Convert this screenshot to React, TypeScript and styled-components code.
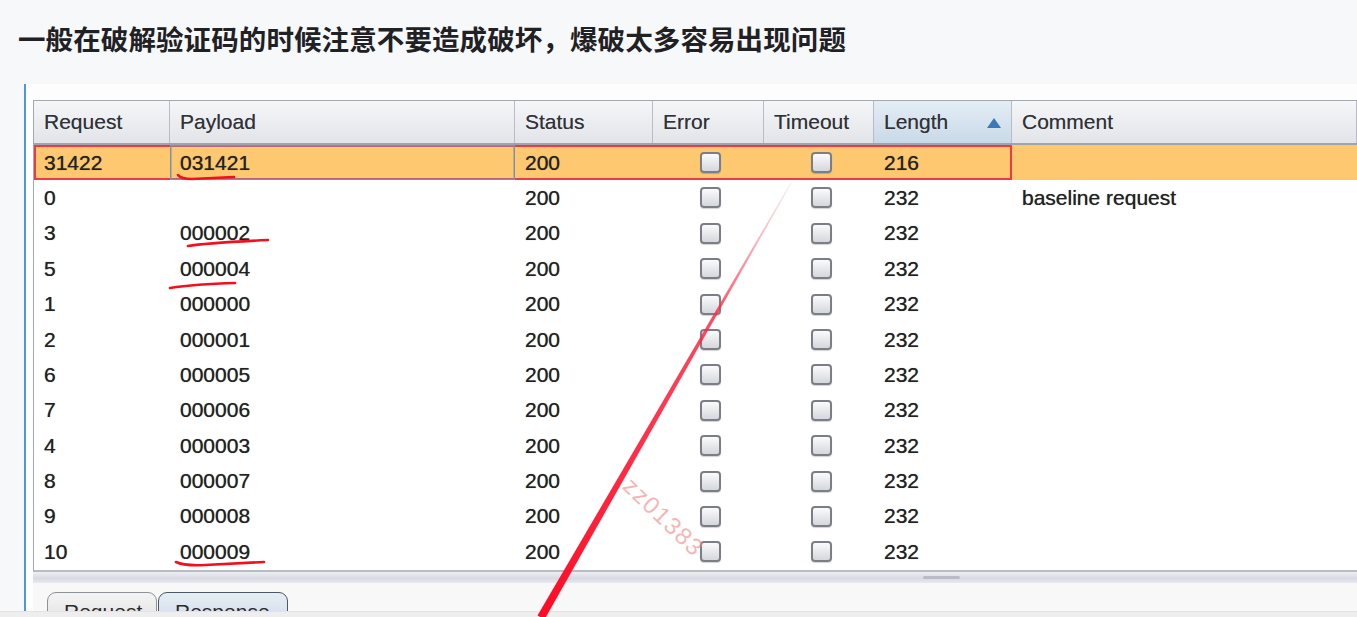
import React from "react";
import styled, { createGlobalStyle } from "styled-components";

const GlobalStyle = createGlobalStyle`
  html, body { margin: 0; padding: 0; }
  body {
    background: #f7f8fa;
    font-family: "Liberation Sans", Arial, sans-serif;
    width: 1357px;
    height: 617px;
    overflow: hidden;
  }
`;

const Page = styled.div`
  position: relative;
  width: 1357px;
  height: 617px;
  display: flex;
  flex-direction: column;
  overflow: hidden;
`;

const Heading = styled.h2`
  margin: 0;
  height: 84px;
  box-sizing: border-box;
  padding: 21px 0 0 18px;
  font-family: "Noto Sans CJK SC", sans-serif;
  font-weight: 700;
  font-size: 27.5px;
  line-height: 34px;
  color: #1f2124;
  letter-spacing: 0.1px;
`;

const Quote = styled.div`
  margin-left: 24px;
  height: 528px;
  box-sizing: border-box;
  border-left: 2px solid #4f97dc;
  background: #fdfdfd;
  padding: 16px 0 0 7px;
  display: flex;
  flex-direction: column;
  overflow: hidden;
`;

const Shot = styled.div`
  display: flex;
  flex-direction: column;
  flex: 1;
  min-height: 0;
`;

const Table = styled.div`
  border-left: 1px solid #a4a9b0;
  border-top: 1px solid #a4a9b0;
  border-bottom: 2px solid #b8bcc2;
  background: #fff;
  display: flex;
  flex-direction: column;
`;

const HeaderRow = styled.div`
  display: flex;
  height: 44px;
  box-sizing: border-box;
  border-bottom: 2px solid #9ea4ac;
`;

const HeadCell = styled.div<{ $w?: number; $sorted?: boolean }>`
  ${(p) => (p.$w ? `width: ${p.$w}px;` : "flex: 1;")}
  flex-shrink: 0;
  box-sizing: border-box;
  display: flex;
  align-items: center;
  justify-content: space-between;
  padding: 0 10px 0 10px;
  border-right: 1px solid #b8bdc5;
  background: ${(p) =>
    p.$sorted
      ? "linear-gradient(#e4edf6, #c9d9e8)"
      : "linear-gradient(#f5f6f8, #e2e4e9)"};
  font-size: 21px;
  color: #2f3338;
  text-shadow: 0 0 0.6px rgba(40, 40, 40, 0.6);
`;

const SortArrow = styled.span`
  width: 0;
  height: 0;
  border-left: 7px solid transparent;
  border-right: 7px solid transparent;
  border-bottom: 10px solid #3a78b8;
  margin-top: 2px;
`;

const Row = styled.div<{ $hl?: boolean }>`
  display: flex;
  height: 35.4px;
  background: ${(p) => (p.$hl ? "#fdc86f" : "#ffffff")};
`;

const Marked = styled.div<{ $hl?: boolean }>`
  display: flex;
  box-shadow: ${(p) => (p.$hl ? "inset 0 0 0 2px #ef3a44" : "none")};
`;

const Cell = styled.div<{ $w?: number; $center?: boolean; $focus?: boolean }>`
  ${(p) => (p.$w ? `width: ${p.$w}px;` : "flex: 1;")}
  flex-shrink: 0;
  box-sizing: border-box;
  display: flex;
  align-items: center;
  justify-content: ${(p) => (p.$center ? "center" : "flex-start")};
  padding: ${(p) => (p.$center ? "0 0 0 4px" : "0 0 0 10px")};
  font-size: 21px;
  color: #222222;
  text-shadow: 0 0 0.7px rgba(20, 20, 20, 0.7);
  box-shadow: ${(p) => (p.$focus ? "inset 0 0 0 1.5px #7a92ae" : "none")};
`;

const Check = styled.span`
  width: 21px;
  height: 21px;
  box-sizing: border-box;
  border-radius: 4px;
  border: 2px solid #7b7f85;
  background: linear-gradient(#fbfbfc, #d4d7dc);
  box-shadow: 0 1px 1px rgba(0, 0, 0, 0.18);
`;

const ScrollStrip = styled.div`
  height: 11px;
  background: linear-gradient(#eceef2, #d8dae3 60%, #e9eaef);
  display: flex;
  align-items: flex-start;
  padding-left: 890px;
`;

const Thumb = styled.span`
  margin-top: 4px;
  width: 37px;
  height: 3px;
  border-radius: 2px;
  background: #b9bcc6;
`;

const TabArea = styled.div`
  flex: 1;
  background: #f8f8f8;
  display: flex;
  align-items: flex-start;
  padding: 9px 0 0 14px;
  overflow: hidden;
`;

const Tab = styled.div<{ $active?: boolean; $w: number }>`
  width: ${(p) => p.$w}px;
  height: 40px;
  box-sizing: border-box;
  border: 1.5px solid ${(p) => (p.$active ? "#4d5864" : "#8d9198")};
  border-radius: 9px 9px 0 0;
  background: ${(p) =>
    p.$active
      ? "linear-gradient(#e6edf4, #cdd9e6)"
      : "linear-gradient(#f4f4f4, #dddddd)"};
  font-size: 21px;
  color: #2c2c2c;
  padding: 7px 0 0 16px;
  margin-right: 1px;
`;

const Footer = styled.div`
  height: 5px;
  background: #eeeeef;
  border-top: 1px solid #e3e3e5;
`;

const Overlay = styled.svg`
  position: absolute;
  left: 0;
  top: 0;
  pointer-events: none;
`;

const Watermark = styled.span`
  position: absolute;
  left: 627px;
  top: 468px;
  transform-origin: 0 50%;
  transform: rotate(44deg);
  font-family: "Liberation Sans", Arial, sans-serif;
  font-size: 24px;
  letter-spacing: 1.5px;
  color: rgba(243, 130, 132, 0.6);
  white-space: nowrap;
  pointer-events: none;
`;

const W = [136, 345, 138, 111, 110, 138];

type R = { req: string; pay: string; len: string; comment?: string };

const rows: R[] = [
  { req: "31422", pay: "031421", len: "216" },
  { req: "0", pay: "", len: "232", comment: "baseline request" },
  { req: "3", pay: "000002", len: "232" },
  { req: "5", pay: "000004", len: "232" },
  { req: "1", pay: "000000", len: "232" },
  { req: "2", pay: "000001", len: "232" },
  { req: "6", pay: "000005", len: "232" },
  { req: "7", pay: "000006", len: "232" },
  { req: "4", pay: "000003", len: "232" },
  { req: "8", pay: "000007", len: "232" },
  { req: "9", pay: "000008", len: "232" },
  { req: "10", pay: "000009", len: "232" },
];

export default function App() {
  return (
    <Page>
      <GlobalStyle />
      <Heading>一般在破解验证码的时候注意不要造成破坏，爆破太多容易出现问题</Heading>
      <Quote>
        <Shot>
          <Table>
            <HeaderRow>
              <HeadCell $w={W[0]}>Request</HeadCell>
              <HeadCell $w={W[1]}>Payload</HeadCell>
              <HeadCell $w={W[2]}>Status</HeadCell>
              <HeadCell $w={W[3]}>Error</HeadCell>
              <HeadCell $w={W[4]}>Timeout</HeadCell>
              <HeadCell $w={W[5]} $sorted>
                Length
                <SortArrow />
              </HeadCell>
              <HeadCell>Comment</HeadCell>
            </HeaderRow>
            {rows.map((r, i) => (
              <Row key={i} $hl={i === 0}>
                <Marked $hl={i === 0}>
                  <Cell $w={W[0]}>{r.req}</Cell>
                  <Cell $w={W[1]} $focus={i === 0}>
                    {r.pay}
                  </Cell>
                  <Cell $w={W[2]}>200</Cell>
                  <Cell $w={W[3]} $center>
                    <Check />
                  </Cell>
                  <Cell $w={W[4]} $center>
                    <Check />
                  </Cell>
                  <Cell $w={W[5]}>{r.len}</Cell>
                </Marked>
                <Cell>{r.comment ?? ""}</Cell>
              </Row>
            ))}
          </Table>
          <ScrollStrip>
            <Thumb />
          </ScrollStrip>
          <TabArea>
            <Tab $w={110}>Request</Tab>
            <Tab $w={130} $active>
              Response
            </Tab>
          </TabArea>
        </Shot>
      </Quote>
      <Footer />
      <Watermark>zz01383</Watermark>
      <Overlay width="1357" height="617" viewBox="0 0 1357 617">
        <defs>
          <linearGradient id="redline" x1="791" y1="183" x2="541" y2="617" gradientUnits="userSpaceOnUse">
            <stop offset="0" stopColor="#ff6b80" stopOpacity="0.15" />
            <stop offset="0.3" stopColor="#ff2a45" stopOpacity="0.85" />
            <stop offset="1" stopColor="#ff0a24" stopOpacity="1" />
          </linearGradient>
        </defs>
        <polygon points="791.4,183.2 790.6,182.8 537.5,615.5 544.5,619.5" fill="url(#redline)" />
        <g fill="none" stroke="#f2101c" strokeWidth="2.6" strokeLinecap="round">
          <path d="M178,175 Q181,179 192,179 L234,177" />
          <path d="M188,246 Q205,243 268,240" />
          <path d="M170,288 Q195,284 235,283" />
          <path d="M176,562 Q184,566 205,565 L264,562" />
        </g>
      </Overlay>
    </Page>
  );
}
